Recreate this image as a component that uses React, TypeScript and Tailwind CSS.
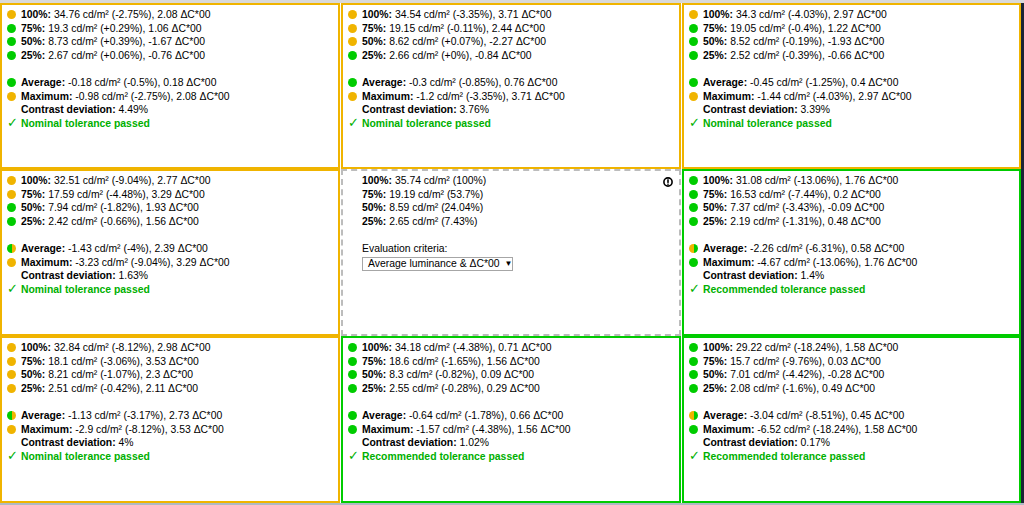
import React from "react";

type Dot = "y" | "g" | "gy" | "yg";

type Row = { label: string; text: string; dot: Dot };

type Cell = {
  ok: "nominal" | "recommended";
  rows: Row[];
  avg: Row;
  max: Row;
  contrast: string;
};

const YELLOW = "#f0b400";
const GREEN = "#00cc00";

const r = (label: string, text: string, dot: Dot): Row => ({ label, text, dot });

const cells: (Cell | null)[] = [
  {
    ok: "nominal",
    rows: [
      r("100%", "34.76 cd/m² (-2.75%), 2.08 ΔC*00", "y"),
      r("75%", "19.3 cd/m² (+0.29%), 1.06 ΔC*00", "g"),
      r("50%", "8.73 cd/m² (+0.39%), -1.67 ΔC*00", "g"),
      r("25%", "2.67 cd/m² (+0.06%), -0.76 ΔC*00", "g"),
    ],
    avg: r("Average", "-0.18 cd/m² (-0.5%), 0.18 ΔC*00", "g"),
    max: r("Maximum", "-0.98 cd/m² (-2.75%), 2.08 ΔC*00", "y"),
    contrast: "4.49%",
  },
  {
    ok: "nominal",
    rows: [
      r("100%", "34.54 cd/m² (-3.35%), 3.71 ΔC*00", "y"),
      r("75%", "19.15 cd/m² (-0.11%), 2.44 ΔC*00", "y"),
      r("50%", "8.62 cd/m² (+0.07%), -2.27 ΔC*00", "y"),
      r("25%", "2.66 cd/m² (+0%), -0.84 ΔC*00", "g"),
    ],
    avg: r("Average", "-0.3 cd/m² (-0.85%), 0.76 ΔC*00", "g"),
    max: r("Maximum", "-1.2 cd/m² (-3.35%), 3.71 ΔC*00", "y"),
    contrast: "3.76%",
  },
  {
    ok: "nominal",
    rows: [
      r("100%", "34.3 cd/m² (-4.03%), 2.97 ΔC*00", "y"),
      r("75%", "19.05 cd/m² (-0.4%), 1.22 ΔC*00", "g"),
      r("50%", "8.52 cd/m² (-0.19%), -1.93 ΔC*00", "g"),
      r("25%", "2.52 cd/m² (-0.39%), -0.66 ΔC*00", "g"),
    ],
    avg: r("Average", "-0.45 cd/m² (-1.25%), 0.4 ΔC*00", "g"),
    max: r("Maximum", "-1.44 cd/m² (-4.03%), 2.97 ΔC*00", "y"),
    contrast: "3.39%",
  },
  {
    ok: "nominal",
    rows: [
      r("100%", "32.51 cd/m² (-9.04%), 2.77 ΔC*00", "y"),
      r("75%", "17.59 cd/m² (-4.48%), 3.29 ΔC*00", "y"),
      r("50%", "7.94 cd/m² (-1.82%), 1.93 ΔC*00", "g"),
      r("25%", "2.42 cd/m² (-0.66%), 1.56 ΔC*00", "g"),
    ],
    avg: r("Average", "-1.43 cd/m² (-4%), 2.39 ΔC*00", "gy"),
    max: r("Maximum", "-3.23 cd/m² (-9.04%), 3.29 ΔC*00", "y"),
    contrast: "1.63%",
  },
  null,
  {
    ok: "recommended",
    rows: [
      r("100%", "31.08 cd/m² (-13.06%), 1.76 ΔC*00", "g"),
      r("75%", "16.53 cd/m² (-7.44%), 0.2 ΔC*00", "g"),
      r("50%", "7.37 cd/m² (-3.43%), -0.09 ΔC*00", "g"),
      r("25%", "2.19 cd/m² (-1.31%), 0.48 ΔC*00", "g"),
    ],
    avg: r("Average", "-2.26 cd/m² (-6.31%), 0.58 ΔC*00", "yg"),
    max: r("Maximum", "-4.67 cd/m² (-13.06%), 1.76 ΔC*00", "g"),
    contrast: "1.4%",
  },
  {
    ok: "nominal",
    rows: [
      r("100%", "32.84 cd/m² (-8.12%), 2.98 ΔC*00", "y"),
      r("75%", "18.1 cd/m² (-3.06%), 3.53 ΔC*00", "y"),
      r("50%", "8.21 cd/m² (-1.07%), 2.3 ΔC*00", "y"),
      r("25%", "2.51 cd/m² (-0.42%), 2.11 ΔC*00", "y"),
    ],
    avg: r("Average", "-1.13 cd/m² (-3.17%), 2.73 ΔC*00", "gy"),
    max: r("Maximum", "-2.9 cd/m² (-8.12%), 3.53 ΔC*00", "y"),
    contrast: "4%",
  },
  {
    ok: "recommended",
    rows: [
      r("100%", "34.18 cd/m² (-4.38%), 0.71 ΔC*00", "g"),
      r("75%", "18.6 cd/m² (-1.65%), 1.56 ΔC*00", "g"),
      r("50%", "8.3 cd/m² (-0.82%), 0.09 ΔC*00", "g"),
      r("25%", "2.55 cd/m² (-0.28%), 0.29 ΔC*00", "g"),
    ],
    avg: r("Average", "-0.64 cd/m² (-1.78%), 0.66 ΔC*00", "g"),
    max: r("Maximum", "-1.57 cd/m² (-4.38%), 1.56 ΔC*00", "g"),
    contrast: "1.02%",
  },
  {
    ok: "recommended",
    rows: [
      r("100%", "29.22 cd/m² (-18.24%), 1.58 ΔC*00", "g"),
      r("75%", "15.7 cd/m² (-9.76%), 0.03 ΔC*00", "g"),
      r("50%", "7.01 cd/m² (-4.42%), -0.28 ΔC*00", "g"),
      r("25%", "2.08 cd/m² (-1.6%), 0.49 ΔC*00", "g"),
    ],
    avg: r("Average", "-3.04 cd/m² (-8.51%), 0.45 ΔC*00", "yg"),
    max: r("Maximum", "-6.52 cd/m² (-18.24%), 1.58 ΔC*00", "g"),
    contrast: "0.17%",
  },
];

function Circle({ dot }: { dot: Dot }) {
  const left = dot === "y" || dot === "yg" ? YELLOW : GREEN;
  const right = dot === "y" || dot === "gy" ? YELLOW : GREEN;
  return (
    <span className="flex w-[9px] h-[9px] shrink-0 rounded-full overflow-hidden">
      <span className="w-1/2 h-full" style={{ backgroundColor: left }} />
      <span className="w-1/2 h-full" style={{ backgroundColor: right }} />
    </span>
  );
}

function Line({ row }: { row: Row }) {
  return (
    <div className="flex items-center gap-[5px] whitespace-nowrap">
      <Circle dot={row.dot} />
      <span>
        <b>{row.label}:</b> {row.text}
      </span>
    </div>
  );
}

function ResultCell({ cell }: { cell: Cell }) {
  const border = cell.ok === "recommended" ? "border-[#00cc00]" : "border-[#f0b400]";
  return (
    <div className={`border-2 ${border} pl-[5px] pt-[3px] bg-white`}>
      {cell.rows.map((row) => (
        <Line key={row.label} row={row} />
      ))}
      <div className="h-[13.6px]" />
      <Line row={cell.avg} />
      <Line row={cell.max} />
      <div className="pl-[14px] whitespace-nowrap">
        <b>Contrast deviation:</b> {cell.contrast}
      </div>
      <div className="flex items-center whitespace-nowrap text-[#00b000]">
        <span className="w-[14px] text-[12.5px] leading-[13.6px]">✓</span>
        <b>
          {cell.ok === "recommended" ? "Recommended" : "Nominal"} tolerance passed
        </b>
      </div>
    </div>
  );
}

function ReferenceCell() {
  const ref = [
    ["100%", "35.74 cd/m² (100%)"],
    ["75%", "19.19 cd/m² (53.7%)"],
    ["50%", "8.59 cd/m² (24.04%)"],
    ["25%", "2.65 cd/m² (7.43%)"],
  ];
  return (
    <div className="relative border-2 border-dashed border-[#bcbcbc] pl-[19px] pt-[3px] bg-white">
      <svg
        className="absolute top-[6px] right-[6px]"
        width="10"
        height="10"
        viewBox="0 0 10 10"
      >
        <circle cx="5" cy="5" r="4.1" fill="none" stroke="#000" strokeWidth="1.6" />
        <rect x="4.2" y="2.3" width="1.6" height="3.6" fill="#000" />
        <rect x="4.2" y="6.6" width="1.6" height="1.2" fill="#000" />
      </svg>
      {ref.map(([label, text]) => (
        <div key={label} className="whitespace-nowrap">
          <b>{label}:</b> {text}
        </div>
      ))}
      <div className="h-[13.6px]" />
      <div>Evaluation criteria:</div>
      <div className="mt-px flex items-center w-[151px] h-[14px] border border-[#a6a6a6] px-[5px] whitespace-nowrap">
        <span>Average luminance &amp; ΔC*00</span>
        <span className="ml-[5px] text-[8px]">▼</span>
      </div>
    </div>
  );
}

export default function App() {
  return (
    <div
      className="w-[1024px] h-[505px] flex flex-col bg-[#aeb9c4] text-[10.4px] leading-[13.6px] text-black overflow-hidden"
      style={{ fontFamily: '"Liberation Sans", Arial, sans-serif' }}
    >
      <div className="h-[3px] bg-[#d9d9d9]" />
      <div className="flex">
        <div className="grid grid-cols-[340px_340px_339px] grid-rows-[166px_167px_167px] gap-x-px bg-white">
          {cells.map((cell, i) =>
            cell ? <ResultCell key={i} cell={cell} /> : <ReferenceCell key={i} />
          )}
        </div>
        <div className="w-[4px] bg-[#1b2535]" />
      </div>
    </div>
  );
}
